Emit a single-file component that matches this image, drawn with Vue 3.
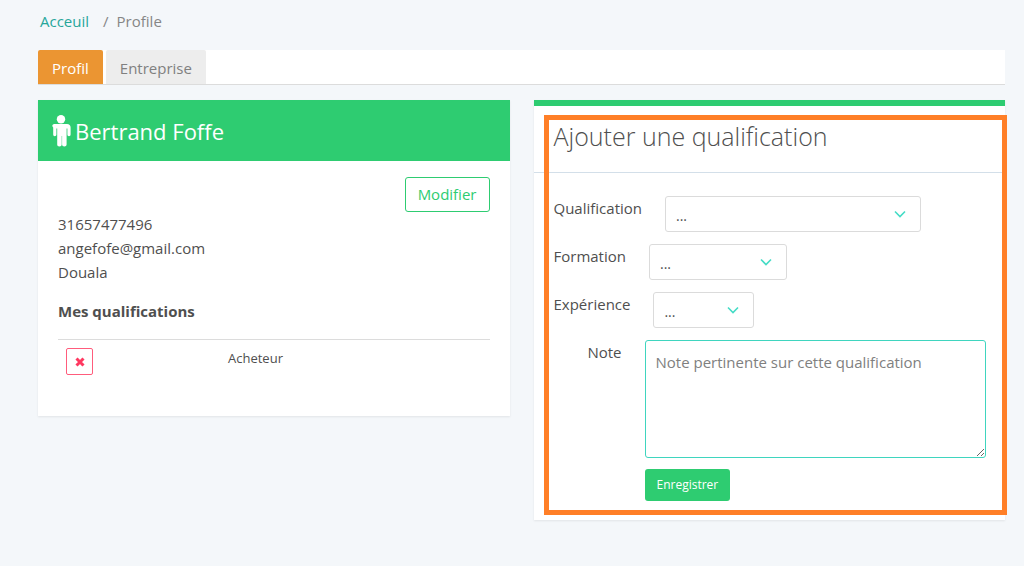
<script setup>
import { ref } from 'vue'

const contact = ['31657477496', 'angefofe@gmail.com', 'Douala']
const qualifications = ['Acheteur']
const fields = [
  { id: 'qualification', label: 'Qualification', size: 'large' },
  { id: 'formation', label: 'Formation', size: 'medium' },
  { id: 'experience', label: 'Expérience', size: 'small' },
]
const note = ref('')
</script>

<template>
  <main class="page">
    <nav class="breadcrumb">
      <a href="#" class="home">Acceuil</a>
      <span class="sep">/</span>
      <span>Profile</span>
    </nav>

    <div class="tabs">
      <button type="button" class="tab active">Profil</button>
      <button type="button" class="tab">Entreprise</button>
    </div>

    <div class="columns">
      <section class="card">
        <header class="banner">
          <svg class="person" viewBox="0 0 20 32" aria-hidden="true">
            <circle cx="10" cy="4.2" r="4.2" />
            <path d="M4 9h12c2.200 0 3.600 1.400 3.600 3.600v7c0 1-.7 1.700-1.600 1.700s-1.600-.7-1.600-1.700v-6h-.8v16c0 1.200-.9 2-2.300 2s-2.200-.8-2.200-2v-8.600h-.4v8.600c0 1.200-.9 2-2.300 2s-2.200-.8-2.200-2v-16h-.8v6c0 1-.7 1.700-1.600 1.700s-1.600-.7-1.600-1.700v-7C.4 10.400 1.800 9 4 9z" />
          </svg>
          <h1>Bertrand Foffe</h1>
        </header>
        <div class="profile">
          <button type="button" class="edit">Modifier</button>
          <p v-for="line in contact" :key="line">{{ line }}</p>
          <h2>Mes qualifications</h2>
          <table>
            <tbody>
              <tr v-for="q in qualifications" :key="q">
                <td class="action">
                  <button type="button" class="remove" :aria-label="'Supprimer ' + q">
                    <svg viewBox="0 0 12 12" aria-hidden="true">
                      <path d="M2.500 2.500l7 7M9.500 2.500l-7 7" />
                    </svg>
                  </button>
                </td>
                <td>{{ q }}</td>
              </tr>
            </tbody>
          </table>
        </div>
      </section>

      <section class="card accent">
        <h2 class="title">Ajouter une qualification</h2>
        <form @submit.prevent>
          <div v-for="f in fields" :key="f.id" class="row">
            <label :for="f.id">{{ f.label }}</label>
            <div class="select" :class="f.size">
              <select :id="f.id"><option>...</option></select>
              <svg class="chevron" viewBox="0 0 12 8" aria-hidden="true">
                <path d="M1 1.500l5 5 5-5" />
              </svg>
            </div>
          </div>
          <div class="row">
            <label for="note">Note</label>
            <div class="note">
              <textarea id="note" v-model="note" placeholder="Note pertinente sur cette qualification"></textarea>
              <button type="submit" class="save">Enregistrer</button>
            </div>
          </div>
        </form>
        <div class="highlight"></div>
      </section>
    </div>
  </main>
</template>

<style>
body {
  background: #f4f7fa;
}
</style>

<style scoped>
.page {
  padding: 9px 19px 45px 38px;
  font-family: "Open Sans", "Noto Sans", sans-serif;
  font-size: 15px;
  line-height: 24px;
  color: #4f4f4f;
}
.page * {
  box-sizing: border-box;
}
button,
select,
textarea {
  font: inherit;
  margin: 0;
}
h1,
h2,
p {
  margin: 0;
}
.breadcrumb {
  display: flex;
  padding-left: 2px;
  color: #868686;
}
.home {
  color: #26a69a;
  text-decoration: none;
}
.sep {
  margin: 0 8px 0 14px;
}
.tabs {
  display: flex;
  gap: 3px;
  height: 35px;
  margin-top: 17px;
  background: #fff;
  border-bottom: 1px solid #dcdcdc;
}
.tab {
  padding: 2px 14px 0;
  border: 0;
  border-radius: 2px 2px 0 0;
  background: #ededed;
  color: #808080;
}
.tab.active {
  background: #eb9532;
  color: #fff;
}
.columns {
  display: grid;
  grid-template-columns: 1fr 1fr;
  align-items: start;
  gap: 24px;
  margin-top: 15px;
}
.card {
  position: relative;
  background: #fff;
  box-shadow: 0 1px 2px rgba(0, 0, 0, 0.08);
}
.banner {
  display: flex;
  align-items: center;
  gap: 4px;
  height: 61px;
  padding: 0 13px;
  background: #2ecc71;
  color: #fff;
}
.person {
  width: 20px;
  height: 32px;
  fill: #fff;
}
h1 {
  font-size: 22px;
  font-weight: 400;
  line-height: 32px;
}
.profile {
  display: flex;
  flex-direction: column;
  padding: 16px 20px 37px;
}
.edit {
  align-self: flex-end;
  height: 35px;
  padding: 0 12px 1px;
  border: 1px solid #2ecc71;
  border-radius: 3px;
  background: #fff;
  color: #2ecc71;
}
.profile h2 {
  margin: 15px 0 16px;
  font-size: 15px;
  font-weight: 700;
}
table {
  width: 100%;
  border-collapse: collapse;
  border-top: 1px solid #dcdcdc;
  font-size: 13px;
  line-height: 20px;
}
td {
  padding: 8px 8px 4px;
  vertical-align: top;
}
.action {
  width: 162px;
}
.remove {
  display: flex;
  align-items: center;
  justify-content: center;
  width: 27px;
  height: 27px;
  padding: 1px 0 0;
  border: 1px solid #ff5c7c;
  border-radius: 2px;
  background: #fff;
}
.remove svg {
  width: 12px;
  height: 12px;
  fill: none;
  stroke: #ff3860;
  stroke-width: 3;
}
.accent {
  border-top: 6px solid #2ecc71;
}
.title {
  padding: 10px 20px 16px;
  border-bottom: 1px solid #d3dfe9;
  font-size: 25px;
  font-weight: 300;
  line-height: 40px;
}
form {
  display: flex;
  flex-direction: column;
  gap: 12px;
  padding: 23px 19px 19px 20px;
}
.row {
  display: flex;
  align-items: flex-start;
  gap: 23px;
}
label {
  min-width: 68px;
  text-align: right;
}
.select {
  position: relative;
}
.large {
  width: 256px;
}
.medium {
  width: 138px;
}
.small {
  width: 101px;
}
select {
  display: block;
  width: 100%;
  height: 36px;
  padding: 4px 10px 0;
  appearance: none;
  border: 1px solid #dbdbdb;
  border-radius: 3px;
  background: #fff;
  color: #4f4f4f;
  font-size: 14px;
}
.chevron {
  position: absolute;
  right: 15px;
  top: 14px;
  width: 12px;
  height: 8px;
  fill: none;
  stroke: #45dcc6;
  stroke-width: 1.6;
  pointer-events: none;
}
.note {
  flex: 1;
}
textarea {
  display: block;
  width: 100%;
  height: 118px;
  padding: 9px 10px;
  border: 1px solid #3fd5bf;
  border-radius: 3px;
  outline: 0;
  background: #fff;
  color: #4f4f4f;
  resize: both;
}
textarea::placeholder {
  color: #808080;
}
.save {
  display: block;
  height: 32px;
  margin-top: 11px;
  padding: 0 12px;
  border: 0;
  border-radius: 3px;
  background: #2ecc71;
  color: #fff;
  font-size: 12px;
}
.highlight {
  position: absolute;
  inset: 9px -2px 5px 10px;
  border: 5px solid #ff7f27;
  pointer-events: none;
}
</style>
